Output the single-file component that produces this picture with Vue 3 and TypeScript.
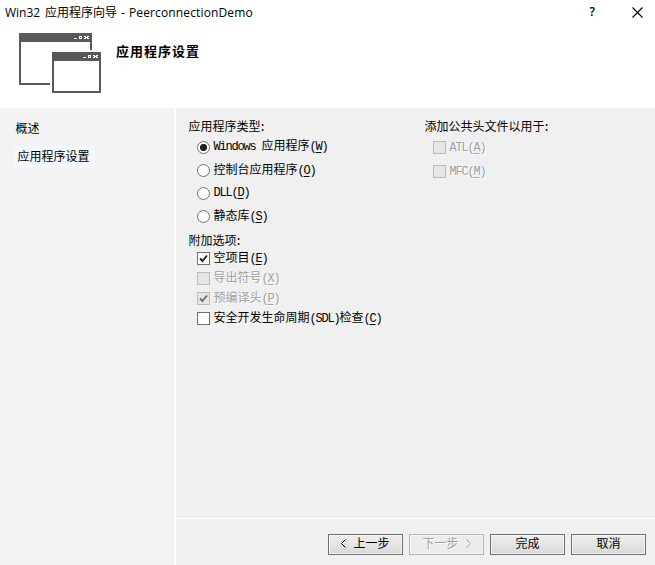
<script setup lang="ts">
import { ref } from 'vue'

interface Option {
  cjk: string
  lead?: string
  mid?: string
  tail?: string
  key: string
  disabled?: boolean
  checked?: boolean
}

const appTypes: Option[] = [
  { lead: 'Windows ', cjk: '应用程序', key: 'W' },
  { cjk: '控制台应用程序', key: 'O' },
  { lead: 'DLL', cjk: '', key: 'D' },
  { cjk: '静态库', key: 'S' },
]
const selected = ref(0)

const extras = ref<Option[]>([
  { cjk: '空项目', key: 'E', checked: true },
  { cjk: '导出符号', key: 'X', disabled: true },
  { cjk: '预编译头', key: 'P', disabled: true, checked: true },
  { cjk: '安全开发生命周期', mid: '(SDL)', tail: '检查', key: 'C' },
])
const headers: Option[] = [
  { lead: 'ATL', cjk: '', key: 'A', disabled: true },
  { lead: 'MFC', cjk: '', key: 'M', disabled: true },
]
function toggle(o: Option) {
  if (!o.disabled) o.checked = !o.checked
}
</script>

<template>
  <div class="window">
    <header class="titlebar">
      <h1 class="title"><span class="t-a">Win32</span><span class="t-cjk">应用程序向导</span><span class="t-dash">-</span><span class="t-b">PeerconnectionDemo</span></h1>
      <span class="help">?</span>
      <svg class="close" width="11" height="11" viewBox="0 0 11 11"><path d="M.5 .5l10 10M10.500 .5l-10 10" stroke="#000" stroke-width="1.1" fill="none" /></svg>
    </header>
    <section class="banner">
      <svg class="logo" width="82" height="60" viewBox="0 0 82 60" shape-rendering="crispEdges">
        <path fill="#58595b" d="M0 0h73v17h-2V9H2v41h29v2H0z" />
        <path fill="#58595b" d="M33 19h49v41H33z" />
        <path fill="#fff" d="M35 28h45v30H35z" />
        <g id="controls" fill="#fff">
          <path d="M55 5h3v1h-3z" />
          <path fill-rule="evenodd" d="M60 3h3v3h-3zM61 4v1h1v-1z" />
          <path d="M65 3h2v1h-2zM68 3h2v1h-2zM66 4h3v1h-3zM65 5h2v1h-2zM68 5h2v1h-2z" />
        </g>
        <use href="#controls" x="9" y="19" />
      </svg>
      <h2>应用程序设置</h2>
    </section>
    <div class="body">
      <nav>
        <a class="nav-item">概述</a>
        <a class="nav-item current">应用程序设置</a>
      </nav>
      <main>
        <div class="settings">
          <div class="left">
            <p class="caption">应用程序类型<span class="lat colon">:</span></p>
            <div class="radios">
              <label v-for="(o, i) in appTypes" :key="o.key" class="option radio-row" @click="selected = i">
                <span class="radio" :class="{ on: selected === i }"></span>
                <span class="text"><span v-if="o.lead" class="lat">{{ o.lead }}</span>{{ o.cjk }}<span class="lat">(<u>{{ o.key }}</u>)</span></span>
              </label>
            </div>
            <p class="caption second">附加选项<span class="lat colon">:</span></p>
            <div class="checks">
              <label v-for="o in extras" :key="o.key" class="option" :class="{ disabled: o.disabled }" @click="toggle(o)">
                <span class="box">
                  <svg v-if="o.checked" width="11" height="11" viewBox="0 0 11 11"><path d="M2 5.500L4.400 8L9 2.500" fill="none" stroke="currentColor" stroke-width="1.9" /></svg>
                </span>
                <span class="text">{{ o.cjk }}<span v-if="o.mid" class="lat">{{ o.mid }}</span>{{ o.tail }}<span class="lat">(<u>{{ o.key }}</u>)</span></span>
              </label>
            </div>
          </div>
          <div class="right">
            <p class="caption">添加公共头文件以用于<span class="lat colon">:</span></p>
            <div class="header-checks">
              <label v-for="o in headers" :key="o.key" class="option disabled">
                <span class="box"></span>
                <span class="text"><span class="lat">{{ o.lead }}(<u>{{ o.key }}</u>)</span></span>
              </label>
            </div>
          </div>
        </div>
        <footer>
          <button type="button">
            <svg class="prev" width="5" height="9" viewBox="0 0 5 9"><path d="M4.500 .5l-4 4l4 4" fill="none" stroke="currentColor" /></svg>上一步
          </button>
          <button type="button" disabled>
            下一步<svg class="next" width="5" height="9" viewBox="0 0 5 9"><path d="M.5 .5l4 4l-4 4" fill="none" stroke="currentColor" /></svg>
          </button>
          <button type="button">完成</button>
          <button type="button">取消</button>
        </footer>
      </main>
    </div>
  </div>
</template>

<style>
body {
  margin: 0;
  overflow: hidden;
}
</style>

<style scoped>
* {
  box-sizing: border-box;
}
.window {
  width: 655px;
  height: 565px;
  display: flex;
  flex-direction: column;
  background: #fff;
  color: #000;
  font: 12px/14px "Noto Sans CJK SC", sans-serif;
  white-space: nowrap;
}
h1, h2, p {
  margin: 0;
  font-weight: 400;
}
.titlebar {
  height: 26px;
  display: flex;
  align-items: center;
  padding: 0 12px 2px 5px;
}
.title {
  flex: 1;
  display: flex;
  padding-top: 2px;
  font: 12px/16px "Open Sans", "Noto Sans CJK SC", sans-serif;
}
.t-a {
  width: 40px;
}
.t-cjk {
  width: 76px;
}
.t-dash {
  width: 8px;
}
.t-b {
  letter-spacing: 0.130px;
}
.help {
  font: 600 12px/16px "Open Sans", sans-serif;
  margin-right: 37px;
}
.banner {
  height: 82px;
  display: flex;
  align-items: flex-start;
  padding: 7px 0 0 19px;
}
.banner h2 {
  font-size: 13px;
  font-weight: 700;
  letter-spacing: 1px;
  margin: 11px 0 0 15px;
}
.body {
  flex: 1;
  display: flex;
  gap: 2px;
}
nav {
  width: 174px;
  background: #f3f3f3;
  padding: 11px 0 0 14px;
  display: flex;
  flex-direction: column;
  align-items: flex-start;
}
.nav-item {
  height: 18px;
  line-height: 18px;
  padding-left: 1.500px;
}
.nav-item.current {
  width: 80px;
  height: 22px;
  line-height: 20px;
  margin-top: 9px;
  padding-left: 3.500px;
  background: #f3f7ff;
}
main {
  flex: 1;
  display: flex;
  flex-direction: column;
  background: #f0f0f0;
}
.settings {
  height: 410px;
  display: flex;
  padding: 11px 0 0 12px;
}
.left {
  width: 236px;
}
.caption {
  height: 14px;
  padding-left: 0.500px;
}
.radios {
  padding: 3px 0 0 9px;
}
.option {
  display: flex;
  align-items: center;
  height: 20px;
}
.radio-row {
  height: 23px;
}
.text {
  margin-left: 3.500px;
  line-height: 14px;
}
.radio-row .text {
  margin-bottom: 1px;
}
.radio-row:nth-child(1) .text,
.radio-row:nth-child(3) .text {
  margin-bottom: 3px;
}
.lat {
  font-family: "Liberation Mono", monospace;
  letter-spacing: -1.200px;
  white-space: pre;
}
.colon {
  margin-left: -1.500px;
}
.lat u {
  text-underline-offset: 2px;
  text-decoration-thickness: 1px;
}
.radio {
  width: 13px;
  height: 13px;
  border: 1px solid #707070;
  border-radius: 50%;
  background: #fff;
}
.radio.on {
  background: radial-gradient(circle, #222 0 3.200px, #fff 3.900px);
}
.second {
  margin-top: 5px;
}
.checks {
  padding: 1px 0 0 9px;
}
.box {
  width: 13px;
  height: 13px;
  border: 1px solid #707070;
  background: #fff;
  display: flex;
  color: #202020;
}
.disabled .box {
  border-color: #bcbcbc;
  background: #e6e6e6;
  color: #707070;
}
.disabled .text {
  color: #a0a0a0;
  text-shadow: 1px 1px #fff;
}
.header-checks {
  padding: 4px 0 0 9px;
  display: grid;
  gap: 4px;
}
footer {
  flex: 1;
  border-top: 1px solid #fff;
  padding: 15px 9px 0 0;
  display: flex;
  justify-content: flex-end;
  gap: 6px;
}
button {
  width: 75px;
  height: 21px;
  padding: 0 0 3px;
  display: flex;
  align-items: center;
  justify-content: center;
  border: 1px solid #707070;
  border-radius: 0;
  box-shadow: inset 0 0 0 1px #f5f5f5;
  background: linear-gradient(#ededed, #e5e5e5 50%, #d7d7d7);
  color: #000;
  font: inherit;
}
button:disabled {
  border-color: #b4b4b4;
  background: #ececec;
  color: #a0a0a0;
  text-shadow: 1px 1px #fff;
}
.prev {
  margin-right: 7px;
}
.next {
  margin-left: 7px;
}
</style>
